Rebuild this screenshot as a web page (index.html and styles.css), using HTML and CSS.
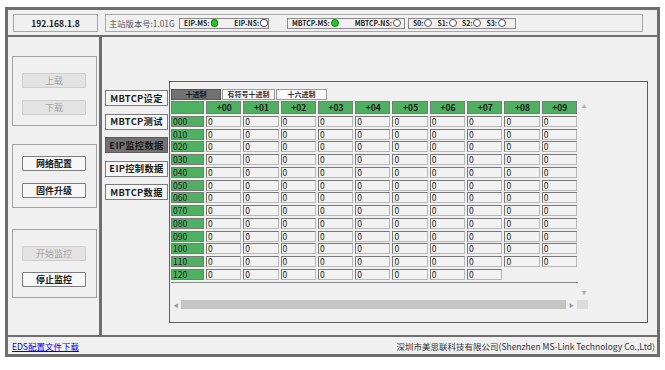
FILE: index.html
```html
<!DOCTYPE html>
<html lang="zh-CN">
<head>
  <meta charset="UTF-8">
  <meta name="viewport" content="width=device-width, initial-scale=1.0">
  <title>EIP监控数据</title>
  <link rel="stylesheet" href="styles.css">
</head>
<body>
  <div class="frame">
    <!-- 顶部状态栏 -->
    <div class="topbar">
      <div class="ip">192.168.1.8</div>
      <div class="status">
        <span class="ver">主站版本号:1.01G</span>
        <div class="leds eip">
          <span>EIP-MS:</span><i class="led on"></i>
          <span class="sp">EIP-NS:</span><i class="led"></i>
        </div>
        <div class="leds mbtcp">
          <span>MBTCP-MS:</span><i class="led on"></i>
          <span class="sp">MBTCP-NS:</span><i class="led"></i>
        </div>
        <div class="leds sbox">
          <span>S0:</span><i class="led"></i>
          <span class="sp">S1:</span><i class="led"></i>
          <span class="sp">S2:</span><i class="led"></i>
          <span class="sp">S3:</span><i class="led"></i>
        </div>
      </div>
    </div>

    <div class="middle">
      <!-- 左侧操作区 -->
      <div class="side">
        <div class="group g1">
          <button class="btn" disabled>上载</button>
          <button class="btn" disabled>下载</button>
        </div>
        <div class="group g2">
          <button class="btn">网络配置</button>
          <button class="btn">固件升级</button>
        </div>
        <div class="group g3">
          <button class="btn" disabled>开始监控</button>
          <button class="btn">停止监控</button>
        </div>
      </div>

      <div class="main">
        <div class="pages">
          <button class="page">MBTCP设定</button>
          <button class="page">MBTCP测试</button>
          <button class="page on">EIP监控数据</button>
          <button class="page">EIP控制数据</button>
          <button class="page">MBTCP数据</button>
        </div>

        <div class="panel">
          <div class="radix">
            <span class="on">十进制</span>
            <span>有符号十进制</span>
            <span>十六进制</span>
          </div>

          <div class="view">
            <div class="table">
              <div class="grid">
                <span class="h"></span><span class="h">+00</span><span class="h">+01</span><span class="h">+02</span><span class="h">+03</span><span class="h">+04</span><span class="h">+05</span><span class="h">+06</span><span class="h">+07</span><span class="h">+08</span><span class="h">+09</span>
                <span class="n">000</span><span>0</span><span>0</span><span>0</span><span>0</span><span>0</span><span>0</span><span>0</span><span>0</span><span>0</span><span>0</span>
                <span class="n">010</span><span>0</span><span>0</span><span>0</span><span>0</span><span>0</span><span>0</span><span>0</span><span>0</span><span>0</span><span>0</span>
                <span class="n">020</span><span>0</span><span>0</span><span>0</span><span>0</span><span>0</span><span>0</span><span>0</span><span>0</span><span>0</span><span>0</span>
                <span class="n">030</span><span>0</span><span>0</span><span>0</span><span>0</span><span>0</span><span>0</span><span>0</span><span>0</span><span>0</span><span>0</span>
                <span class="n">040</span><span>0</span><span>0</span><span>0</span><span>0</span><span>0</span><span>0</span><span>0</span><span>0</span><span>0</span><span>0</span>
                <span class="n">050</span><span>0</span><span>0</span><span>0</span><span>0</span><span>0</span><span>0</span><span>0</span><span>0</span><span>0</span><span>0</span>
                <span class="n">060</span><span>0</span><span>0</span><span>0</span><span>0</span><span>0</span><span>0</span><span>0</span><span>0</span><span>0</span><span>0</span>
                <span class="n">070</span><span>0</span><span>0</span><span>0</span><span>0</span><span>0</span><span>0</span><span>0</span><span>0</span><span>0</span><span>0</span>
                <span class="n">080</span><span>0</span><span>0</span><span>0</span><span>0</span><span>0</span><span>0</span><span>0</span><span>0</span><span>0</span><span>0</span>
                <span class="n">090</span><span>0</span><span>0</span><span>0</span><span>0</span><span>0</span><span>0</span><span>0</span><span>0</span><span>0</span><span>0</span>
                <span class="n">100</span><span>0</span><span>0</span><span>0</span><span>0</span><span>0</span><span>0</span><span>0</span><span>0</span><span>0</span><span>0</span>
                <span class="n">110</span><span>0</span><span>0</span><span>0</span><span>0</span><span>0</span><span>0</span><span>0</span><span>0</span><span>0</span><span>0</span>
                <span class="n">120</span><span>0</span><span>0</span><span>0</span><span>0</span><span>0</span><span>0</span><span>0</span><span>0</span>
              </div>
            </div>
            <div class="vbar">
              <span>&#9650;</span>
              <span>&#9660;</span>
            </div>
          </div>

          <div class="hbar">
            <span class="arrow">&#9664;</span>
            <span class="thumb"></span>
            <span class="arrow">&#9654;</span>
            <span class="corner"></span>
          </div>
        </div>
      </div>
    </div>

    <div class="footer">
      <a href="#">EDS配置文件下载</a>
      <span class="company">深圳市美思联科技有限公司(Shenzhen MS-Link Technology Co.,Ltd)</span>
    </div>
  </div>
</body>
</html>
```

FILE: styles.css
```css
* {
  box-sizing: border-box;
}
body {
  margin: 0;
  background-color: #fff;
  font-family: "Noto Sans CJK SC", "Noto Sans", sans-serif;
  color: #1a1a1a;
}

/* 外框 */
.frame {
  margin: 7px 0 0 5px;
  width: 655px;
  height: 350px;
  border: 3px solid #6e6e6e;
  background-color: #f0f0f0;
  display: flex;
  flex-direction: column;
}

/* 顶部状态栏 */
.topbar {
  height: 27px;
  flex: none;
  display: flex;
  align-items: flex-start;
  padding: 4px 0 0 5px;
  border-bottom: 2px solid #6e6e6e;
}
.ip {
  width: 85px;
  height: 18px;
  border: 1px solid #a8a8a8;
  font-size: 8.5px;
  font-weight: bold;
  display: flex;
  align-items: center;
  justify-content: center;
}
.status {
  margin-left: 7px;
  width: 538px;
  height: 18px;
  border: 1px solid #a8a8a8;
  display: flex;
  align-items: center;
  padding-left: 3px;
}
.ver {
  width: 70px;
  font-size: 8.3px;
  color: #555;
  white-space: nowrap;
}
.leds {
  height: 11px;
  border: 1px solid #8a8a8a;
  display: flex;
  align-items: center;
  padding-left: 4px;
  font-size: 6.8px;
  font-weight: bold;
  white-space: nowrap;
}
.leds .sp {
  margin-left: 16px;
}
.eip {
  width: 90px;
}
.mbtcp {
  margin-left: 18px;
  width: 118px;
}
.sbox {
  margin-left: 3px;
  width: 108px;
}
.sbox .sp {
  margin-left: 5px;
}
.led {
  display: inline-block;
  width: 8px;
  height: 8px;
  margin-left: 1px;
  border: 1px solid #555;
  border-radius: 50%;
  background-color: #fff;
}
.led.on {
  background-color: #12d412;
  border-color: #2b6b2b;
}

.middle {
  flex: 1;
  display: flex;
}

/* 左侧按钮区 */
.side {
  width: 94px;
  flex: none;
  border-right: 3px solid #6e6e6e;
  padding: 19px 0 0 4px;
}
.group {
  width: 85px;
  border: 1px solid #a4a4a4;
  padding-left: 9px;
  display: flex;
  flex-direction: column;
}
.g1 {
  height: 70px;
  padding-top: 16px;
  gap: 12px;
}
.g2 {
  margin-top: 18px;
  height: 64px;
  padding-top: 11px;
  gap: 12px;
}
.g3 {
  margin-top: 21px;
  height: 69px;
  padding-top: 16px;
  gap: 11px;
}
.btn {
  width: 64px;
  height: 15px;
  padding: 0;
  border: 1px solid #7c7c7c;
  border-radius: 1px;
  background-color: #f7f7f7;
  font-family: inherit;
  font-size: 9px;
  font-weight: bold;
  color: #1a1a1a;
  line-height: 12px;
}
.btn:disabled {
  border-color: #cdcdcd;
  background-color: #e3e3e3;
  color: #a6a6a6;
  font-weight: normal;
}

/* 右侧主区 */
.main {
  flex: 1;
  display: flex;
  padding-top: 44px;
}
.pages {
  width: 63px;
  margin-left: 3px;
  padding-top: 9px;
  display: flex;
  flex-direction: column;
  gap: 7.5px;
}
.page {
  height: 16px;
  padding: 0;
  border: 1px solid #7c7c7c;
  background-color: #f7f7f7;
  font-family: inherit;
  font-size: 9.3px;
  font-weight: bold;
  letter-spacing: 0.3px;
  color: #1a1a1a;
  line-height: 13px;
}
.page.on {
  background-color: #727272;
  border-color: #5a5a5a;
}

.panel {
  margin-left: 1px;
  width: 479px;
  height: 242px;
  border: 1px solid #5c5c5c;
}
.radix {
  display: flex;
  gap: 1px;
  margin: 7px 0 0 1px;
  height: 11px;
}
.radix span {
  border: 1px solid #9a9a9a;
  background-color: #fafafa;
  font-size: 7px;
  font-weight: bold;
  line-height: 9px;
  text-align: center;
  color: #333;
}
.radix span:nth-child(1) {
  width: 50px;
}
.radix span:nth-child(2) {
  width: 53px;
}
.radix span:nth-child(3) {
  width: 51px;
}
.radix .on {
  background-color: #727272;
  border-color: #555;
  color: #1a1a1a;
}

.view {
  display: flex;
  margin: 1px 0 0 1px;
}
.table {
  width: 407px;
  height: 182px;
  border-bottom: 1px solid #8c8c8c;
}
.grid {
  display: grid;
  grid-template-columns: 33px repeat(10, 35.3px);
  grid-template-rows: 13px;
  grid-auto-rows: 11px;
  column-gap: 2px;
  row-gap: 1.75px;
}
.grid span {
  border: 1px solid;
  border-color: #777 #b8b8b8 #b8b8b8 #777;
  background-color: #f2f2f2;
  font-size: 8.5px;
  line-height: 9px;
  padding-left: 1px;
  color: #222;
}
.grid .h {
  border-color: #7a7a7a;
  background-color: #4fb062;
  font-weight: bold;
  text-align: center;
  line-height: 11px;
  color: #1a1a1a;
}
.grid .n {
  border-color: #7a7a7a;
  background-color: #4fb062;
}

.vbar {
  width: 12px;
  height: 197px;
  display: flex;
  flex-direction: column;
  justify-content: space-between;
  align-items: center;
  padding: 1px 0 3px;
  font-size: 5px;
  color: #b4b4b4;
}
.hbar {
  display: flex;
  margin: 2px 0 0 1px;
  height: 9px;
}
.hbar .arrow {
  width: 10px;
  font-size: 5px;
  color: #9a9a9a;
  display: flex;
  align-items: center;
  justify-content: center;
}
.hbar .thumb {
  width: 385px;
  background-color: #c4c4c4;
}
.hbar .arrow:nth-child(3) {
  width: 11px;
}
.hbar .corner {
  width: 11px;
  background-color: #dcdcdc;
}

/* 底栏 */
.footer {
  height: 19px;
  flex: none;
  border-top: 2px solid #6e6e6e;
  display: flex;
  justify-content: space-between;
  align-items: center;
  padding: 0 2px 0 4px;
  font-size: 8.5px;
}
.footer a {
  color: #0000ee;
}
.company {
  color: #333;
}
```
